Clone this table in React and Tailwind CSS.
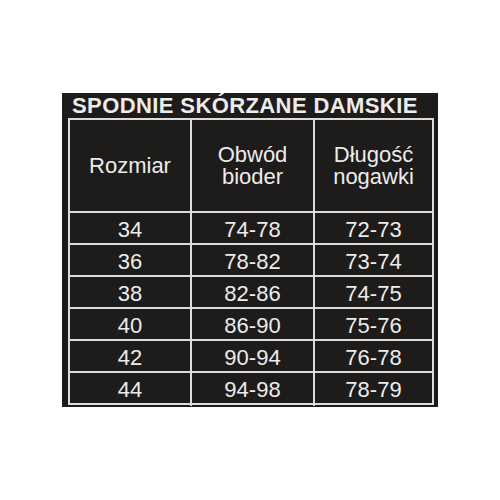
const rows = [
  ["34", "74-78", "72-73"],
  ["36", "78-82", "73-74"],
  ["38", "82-86", "74-75"],
  ["40", "86-90", "75-76"],
  ["42", "90-94", "76-78"],
  ["44", "94-98", "78-79"],
];

export default function App() {
  return (
    <div className="w-[500px] h-[500px] bg-white pt-[93px] font-['Liberation_Sans',Arial,sans-serif]">
      <div className="mx-auto w-[376px] h-[314px] bg-[#1e1b1b] pl-[6px] text-[#ececec]">
        {/* title */}
        <div className="h-[25px] pl-[4px] text-[22px] font-bold leading-[25px] tracking-[0.4px]">
          SPODNIE SKÓRZANE DAMSKIE
        </div>

        {/* size table */}
        <div className="w-[366px] border-2 border-[#dcdcdc]">
          <div className="grid grid-cols-[122px_123px_117px] h-[93px] border-b-2 border-[#dcdcdc] text-[22px] leading-[22px]">
            <div className="flex items-center justify-center border-r-2 border-[#dcdcdc]">Rozmiar</div>
            <div className="flex flex-col items-center justify-center border-r-2 border-[#dcdcdc]">
              <span>Obwód</span>
              <span>bioder</span>
            </div>
            <div className="flex flex-col items-center justify-center">
              <span>Długość</span>
              <span>nogawki</span>
            </div>
          </div>
          {rows.map((r, i) => (
            <div
              key={r[0]}
              className={
                i < rows.length - 1
                  ? "grid grid-cols-[122px_123px_117px] h-[32px] border-b-2 border-[#dcdcdc] text-[22px]"
                  : "grid grid-cols-[122px_123px_117px] h-[30px] text-[22px]"
              }
            >
              <div className="flex items-center justify-center border-r-2 border-[#dcdcdc]">{r[0]}</div>
              <div className="flex items-center justify-center border-r-2 border-[#dcdcdc]">{r[1]}</div>
              <div className="flex items-center justify-center">{r[2]}</div>
            </div>
          ))}
        </div>
      </div>
    </div>
  );
}
